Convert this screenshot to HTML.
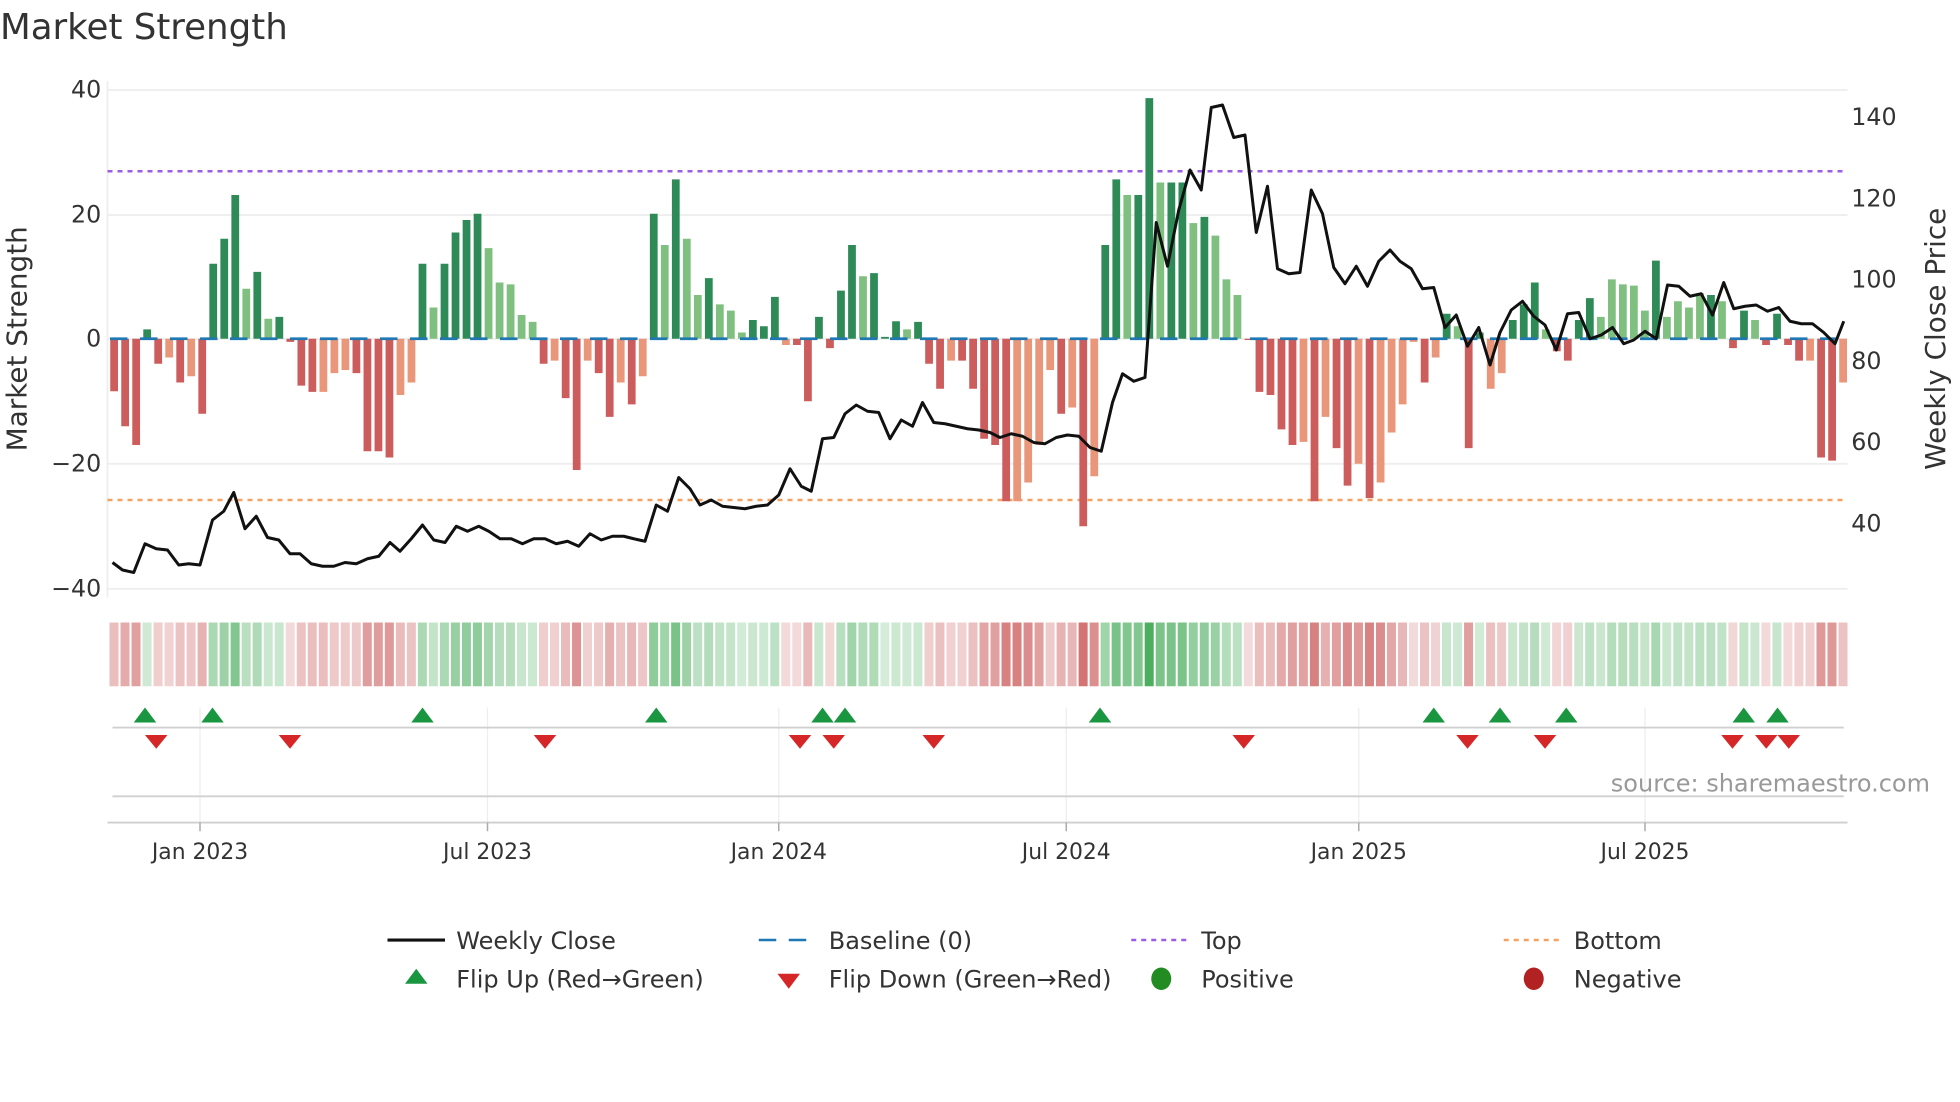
<!DOCTYPE html>
<html><head><meta charset="utf-8"><style>
html,body{margin:0;padding:0;background:#fff;overflow:hidden}
svg{display:block;font-family:"DejaVu Sans","Liberation Sans",sans-serif}
</style></head><body>
<svg id="s" width="1960" height="1102" viewBox="0 0 1568 881.6" preserveAspectRatio="none" xmlns="http://www.w3.org/2000/svg">
<rect width="1568" height="882" fill="#fff"/>
<text x="0" y="31" font-size="28.5" fill="#333">Market Strength</text>
<g stroke="#eeeeee" stroke-width="1.5">
<line x1="86" y1="72" x2="1478" y2="72"/><line x1="86" y1="172" x2="1478" y2="172"/>
<line x1="86" y1="271" x2="1478" y2="271"/><line x1="86" y1="371" x2="1478" y2="371"/>
<line x1="86" y1="471" x2="1478" y2="471"/><line x1="86" y1="65" x2="86" y2="478"/>
</g>
<g font-size="19" fill="#333" text-anchor="end">
<text x="81" y="78">40</text><text x="81" y="178">20</text><text x="81" y="277">0</text>
<text x="81" y="377">−20</text><text x="81" y="477">−40</text>
</g>
<g font-size="19" fill="#333">
<text x="1481" y="100">140</text><text x="1481" y="165">120</text><text x="1481" y="230">100</text>
<text x="1481" y="295">80</text><text x="1481" y="360">60</text><text x="1481" y="425">40</text>
</g>
<text transform="translate(21,271) rotate(-90)" font-size="22.3" fill="#333" text-anchor="middle">Market Strength</text>
<text transform="translate(1556,271) rotate(-90)" font-size="22.3" fill="#333" text-anchor="middle">Weekly Close Price</text>
<line x1="86" y1="137" x2="1478" y2="137" stroke="#9b5de5" stroke-width="2" stroke-dasharray="4 4"/>
<line x1="86" y1="400" x2="1478" y2="400" stroke="#f4a261" stroke-width="2" stroke-dasharray="4 4"/>
<g id="bars"></g>
<line x1="88" y1="271" x2="1478" y2="271" stroke="#1f77b4" stroke-width="2.2" stroke-dasharray="14 10"/>
<polyline id="price" fill="none" stroke="#111" stroke-width="2.4" stroke-linejoin="round"/>
<g id="heat"></g>
<g stroke="#eeeeee" stroke-width="1">
<line x1="160" y1="566" x2="160" y2="658"/><line x1="390" y1="566" x2="390" y2="658"/>
<line x1="623" y1="566" x2="623" y2="658"/><line x1="853" y1="566" x2="853" y2="658"/>
<line x1="1087" y1="566" x2="1087" y2="658"/><line x1="1316" y1="566" x2="1316" y2="658"/>
</g>
<line x1="90" y1="582" x2="1475" y2="582" stroke="#d0d0d0" stroke-width="1.5"/>
<line x1="90" y1="637" x2="1475" y2="637" stroke="#d0d0d0" stroke-width="1.5"/>
<line x1="86" y1="658" x2="1478" y2="658" stroke="#cfcfcf" stroke-width="1.5"/>
<g id="flips"></g>
<text x="1544" y="633" font-size="19.2" fill="#999" text-anchor="end">source: sharemaestro.com</text>
<g stroke="#aaa" stroke-width="1.2">
<line x1="160" y1="658" x2="160" y2="665"/><line x1="390" y1="658" x2="390" y2="665"/>
<line x1="623" y1="658" x2="623" y2="665"/><line x1="853" y1="658" x2="853" y2="665"/>
<line x1="1087" y1="658" x2="1087" y2="665"/><line x1="1316" y1="658" x2="1316" y2="665"/>
</g>
<g font-size="17.5" fill="#333" text-anchor="middle">
<text x="160" y="687">Jan 2023</text><text x="390" y="687">Jul 2023</text><text x="623" y="687">Jan 2024</text>
<text x="853" y="687">Jul 2024</text><text x="1087" y="687">Jan 2025</text><text x="1316" y="687">Jul 2025</text>
</g>
<g font-size="19.2" fill="#333">
<line x1="310" y1="752" x2="356" y2="752" stroke="#111" stroke-width="2.5"/><text x="365" y="759">Weekly Close</text>
<line x1="607" y1="752" x2="651" y2="752" stroke="#1f77b4" stroke-width="2" stroke-dasharray="14 10"/><text x="663" y="759">Baseline (0)</text>
<line x1="905" y1="752" x2="949" y2="752" stroke="#9b5de5" stroke-width="2" stroke-dasharray="4 4"/><text x="961" y="759">Top</text>
<line x1="1203" y1="752" x2="1247" y2="752" stroke="#f4a261" stroke-width="2" stroke-dasharray="4 4"/><text x="1259" y="759">Bottom</text>
<polygon points="333,775 342,787 324,787" fill="#1a9641"/><text x="365" y="790">Flip Up (Red→Green)</text>
<polygon points="622,779 640,779 631,791" fill="#d62728"/><text x="663" y="790">Flip Down (Green→Red)</text>
<ellipse cx="929" cy="783" rx="8" ry="9" fill="#228b22"/><text x="961" y="790">Positive</text>
<ellipse cx="1227" cy="783" rx="8" ry="9" fill="#b22222"/><text x="1259" y="790">Negative</text>
</g>
</svg>
<script>
var NS="http://www.w3.org/2000/svg";
var d=[[-8.4,0],[-14,0],[-17,0],[1.5,0],[-4,0],[-3,1],[-7,0],[-6,1],[-12,0],[12,0],[16,0],[23,0],[8,1],[10.7,0],[3.2,1],[3.5,0],[-0.5,0],[-7.5,0],[-8.5,0],[-8.5,1],[-5.5,1],[-5,1],[-5.5,0],[-18,0],[-18,0],[-19,0],[-9,1],[-7,1],[12,0],[5,1],[12,0],[17,0],[19,0],[20,0],[14.5,1],[9,1],[8.7,1],[3.8,1],[2.7,1],[-4,0],[-3.5,1],[-9.5,0],[-21,0],[-3.5,1],[-5.5,0],[-12.5,0],[-7,1],[-10.5,0],[-6,1],[20,0],[15,1],[25.5,0],[16,1],[7,1],[9.7,0],[5.5,1],[4.5,1],[1,1],[3,0],[2,0],[6.7,0],[-1,1],[-1,0],[-10,0],[3.5,0],[-1.5,0],[7.7,0],[15,0],[10,1],[10.5,0],[0.3,0],[2.8,0],[1.5,1],[2.7,0],[-4,0],[-8,0],[-3.5,1],[-3.5,0],[-8,0],[-16,0],[-17,0],[-26,0],[-26,1],[-23,1],[-17,1],[-5,1],[-12,0],[-11,1],[-30,0],[-22,1],[15,0],[25.5,0],[23,1],[23,0],[38.5,0],[25,1],[25,0],[25,0],[18.5,1],[19.5,0],[16.5,1],[9.5,1],[7,1],[-0.2,0],[-8.5,0],[-9,0],[-14.5,0],[-17,0],[-16.5,1],[-26,0],[-12.5,1],[-17.5,0],[-23.5,0],[-20,1],[-25.5,0],[-23,1],[-15,1],[-10.5,1],[-0.5,1],[-7,0],[-3,1],[4,0],[2,1],[-17.5,0],[1,0],[-8,1],[-5.5,1],[3,0],[5.5,0],[9,0],[1.5,1],[-2,0],[-3.5,0],[3,0],[6.5,0],[3.5,1],[9.5,1],[8.7,1],[8.5,1],[4.5,1],[12.5,0],[3.5,1],[6,1],[5,1],[7.3,1],[7,0],[6,1],[-1.5,0],[4.5,0],[3,1],[-1,0],[4,0],[-1,0],[-3.5,0],[-3.5,1],[-19,0],[-19.5,0],[-7,1]];
var n=d.length,x0=87,x1=1479,step=(x1-x0)/n,bars=document.getElementById('bars'),heat=document.getElementById('heat');
function el(t,a,p){var e=document.createElementNS(NS,t);for(var k in a)e.setAttribute(k,a[k]);p.appendChild(e);return e;}
for(var i=0;i<n;i++){var v=d[i][0],l=d[i][1],x=x0+i*step;
 var c=v>=0?(l?'#7fbf7f':'#2e8b57'):(l?'#e9967a':'#cd5c5c');
 var y=v>=0?271-v*5:271,h=Math.max(Math.abs(v)*5,1);
 el('rect',{x:x+1.2,y:y,width:step-2.6,height:h,fill:c},bars);
 var a=v>=0?0.2+0.65*Math.min(v/38,1):0.2+0.6*Math.min(-v/30,1);
 var hc=v>=0?'rgba(46,160,67,'+a+')':'rgba(200,80,80,'+a+')';
 el('rect',{x:x+0.6,y:498,width:step-1.6,height:51,fill:hc},heat);
}
var p=[[90,450],[98,456],[107,458],[116,435],[125,439],[134,440],[143,452],[151,451],[160,452],[170,416],[179,409],[187,394],[196,423],[205,413],[214,430],[223,432],[232,443],[240,443],[249,451],[258,453],[267,453],[276,450],[285,451],[294,447],[303,445],[312,434],[320,441],[329,431],[338,420],[347,432],[356,434],[365,421],[374,425],[383,421],[391,425],[400,431],[409,431],[418,435],[427,431],[436,431],[445,435],[454,433],[463,437],[472,427],[481,432],[490,429],[499,429],[507,431],[516,433],[525,404],[534,409],[543,382],[552,391],[560,404],[569,400],[578,405],[587,406],[596,407],[605,405],[614,404],[623,396],[632,375],[641,389],[649,393],[658,351],[667,350],[676,331],[685,324],[694,329],[703,330],[712,351],[721,336],[730,341],[738,322],[747,338],[756,339],[765,341],[774,343],[783,344],[792,346],[800,350],[809,347],[818,349],[827,354],[836,355],[845,350],[854,348],[863,349],[872,358],[881,361],[890,322],[898,299],[907,305],[916,302],[925,178],[934,213],[943,168],[952,136],[961,152],[969,86],[978,84],[987,110],[996,108],[1005,186],[1014,149],[1022,215],[1031,219],[1040,218],[1049,152],[1058,171],[1067,214],[1076,227],[1085,213],[1094,229],[1103,209],[1112,200],[1120,209],[1129,215],[1138,231],[1147,230],[1156,262],[1165,252],[1174,277],[1183,262],[1192,292],[1200,266],[1209,248],[1218,241],[1227,253],[1236,260],[1245,280],[1254,251],[1263,250],[1272,271],[1281,268],[1290,262],[1299,275],[1307,272],[1316,265],[1325,271],[1334,228],[1343,229],[1352,237],[1361,235],[1370,252],[1379,226],[1387,247],[1396,245],[1405,244],[1414,249],[1423,246],[1432,257],[1441,259],[1450,259],[1459,266],[1468,275],[1475,257]];
document.getElementById('price').setAttribute('points',p.map(function(q){return q.join(',')}).join(' '));
var f=document.getElementById('flips');
[116,170,338,525,658,676,880,1147,1200,1253,1395,1422].forEach(function(x){el('polygon',{points:(x)+',566 '+(x+9)+',578 '+(x-9)+',578',fill:'#1a9641'},f);});
[125,232,436,640,667,747,995,1174,1236,1386,1413,1431].forEach(function(x){el('polygon',{points:(x-9)+',588 '+(x+9)+',588 '+x+',599',fill:'#d62728'},f);});
</script>
</body></html>
